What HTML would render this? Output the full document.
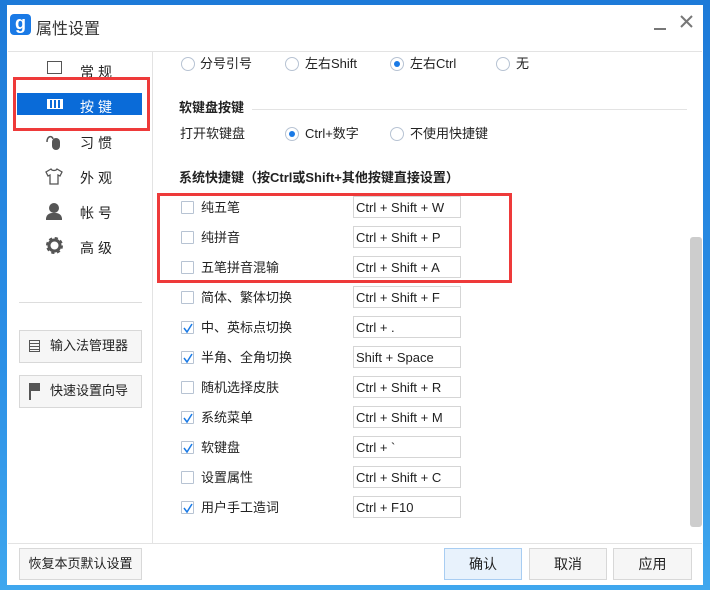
<!DOCTYPE html>
<html><head><meta charset="utf-8"><style>
*{margin:0;padding:0;box-sizing:border-box}
body{width:710px;height:590px;background:linear-gradient(180deg,#1d7ad8,#2b8fe6 60%,#3fa7ee);position:relative;overflow:hidden;font-family:"Liberation Sans","Noto Sans CJK SC",sans-serif;font-size:13px;color:#222}
.win{position:absolute;left:7px;top:5px;width:696px;height:580px;background:#fff}
.a{position:absolute}
.cb{position:absolute;width:13px;height:13px;border:1px solid #b7c3d3;background:#fff;border-radius:1px}
.cb svg{position:absolute;left:0;top:0}
.rd{position:absolute;width:14px;height:14px;border:1px solid #b7c3d3;border-radius:50%;background:#fff}
.rd.on::after{content:"";position:absolute;left:3px;top:3px;width:6px;height:6px;border-radius:50%;background:#1a7ae6}
.inp{position:absolute;width:108px;height:22px;border:1px solid #d5d5d5;background:#fff;padding-left:2px;padding-top:1px;line-height:20px;font-size:13px}
.btn{position:absolute;border:1px solid #d8d8d8;background:#f6f6f6;text-align:center;font-size:14px}
.nav{position:absolute;left:73px;font-size:14px;letter-spacing:4px}
.l{position:absolute;left:194px}
</style></head><body>
<div class="win">
 <div class="a" style="left:3px;top:9px;width:21px;height:21px;background:#1a7ae6;border-radius:4px;color:#fff;font-weight:bold;font-size:18px;line-height:19px;text-align:center">g</div>
 <div class="a" style="left:29px;top:10px;font-size:16px;color:#333">属性设置</div>
 <div class="a" style="left:647px;top:23px;width:12px;height:2px;background:#777"></div>
 <svg class="a" style="left:673px;top:10px" width="13" height="13"><path d="M1 1L12 12M12 1L1 12" stroke="#777" stroke-width="2"/></svg>
 <div class="a" style="left:1px;top:46px;width:694px;height:1px;background:#e3e3e3"></div>
 <div class="a" style="left:145px;top:47px;width:1px;height:491px;background:#e3e3e3"></div>
 <div class="a" style="left:1px;top:538px;width:694px;height:1px;background:#e3e3e3"></div>
 <!-- sidebar -->
 <div class="a" style="left:40px;top:56px;width:15px;height:13px;border:1.5px solid #555"></div>
 <div class="nav" style="top:57px">常规</div>
 <div class="a" style="left:10px;top:88px;width:125px;height:22px;background:#0a6bd8"></div>
 <div class="a" style="left:40px;top:94px;width:16px;height:10px;border:1.5px solid #fff;background:repeating-linear-gradient(90deg,#fff 0 2px,transparent 2px 4px)"></div>
 <div class="nav" style="top:92px;color:#fff">按键</div>
 <div class="a" style="left:6px;top:72px;width:137px;height:54px;border:3px solid #ee3a3a"></div>
 <svg class="a" style="left:38px;top:128px" width="18" height="18"><path d="M2 9C2 3 7 2 8 6" fill="none" stroke="#555" stroke-width="1.5"/><rect x="7" y="5" width="8" height="12" rx="4" fill="#555"/></svg>
 <div class="nav" style="top:128px">习惯</div>
 <svg class="a" style="left:38px;top:163px" width="18" height="17"><path d="M6 1L1 4L3 8L5 7V16H13V7L15 8L17 4L12 1C11 3 7 3 6 1Z" fill="none" stroke="#555" stroke-width="1.3"/></svg>
 <div class="nav" style="top:163px">外观</div>
 <div class="a" style="left:42px;top:198px;width:10px;height:10px;border-radius:50%;background:#555"></div>
 <div class="a" style="left:39px;top:208px;width:16px;height:7px;border-radius:6px 6px 0 0;background:#555"></div>
 <div class="nav" style="top:198px">帐号</div>
 <svg class="a" style="left:39px;top:232px" width="17" height="17"><circle cx="8.5" cy="8.5" r="5.5" fill="none" stroke="#555" stroke-width="3"/><circle cx="8.5" cy="8.5" r="7" fill="none" stroke="#555" stroke-width="3" stroke-dasharray="3 2.5"/></svg>
 <div class="nav" style="top:233px">高级</div>
 <div class="a" style="left:12px;top:297px;width:123px;height:1px;background:#ddd"></div>
 <div class="btn" style="left:12px;top:325px;width:123px;height:33px;line-height:30px;text-align:left;padding-left:30px;font-size:13px">输入法管理器</div>
 <div class="a" style="left:22px;top:335px;width:11px;height:12px;border:1.5px solid #555;background:repeating-linear-gradient(180deg,transparent 0 2px,#555 2px 3px)"></div>
 <div class="btn" style="left:12px;top:370px;width:123px;height:33px;line-height:30px;text-align:left;padding-left:30px;font-size:13px">快速设置向导</div>
 <div class="a" style="left:22px;top:378px;width:2px;height:17px;background:#555"></div>
 <div class="a" style="left:24px;top:378px;width:9px;height:8px;background:#555"></div>
 <div class="btn" style="left:12px;top:543px;width:123px;height:32px;line-height:30px;font-size:13px">恢复本页默认设置</div>
 <!-- content -->
 <div class="rd" style="left:174px;top:52px"></div><div class="a" style="left:193px;top:48px">分号引号</div>
 <div class="rd" style="left:278px;top:52px"></div><div class="a" style="left:298px;top:48px">左右Shift</div>
 <div class="rd on" style="left:383px;top:52px"></div><div class="a" style="left:403px;top:48px">左右Ctrl</div>
 <div class="rd" style="left:489px;top:52px"></div><div class="a" style="left:509px;top:48px">无</div>
 <div class="a" style="left:172px;top:92px;font-weight:bold">软键盘按键</div>
 <div class="a" style="left:245px;top:104px;width:435px;height:1px;background:#e3e3e3"></div>
 <div class="a" style="left:173px;top:118px">打开软键盘</div>
 <div class="rd on" style="left:278px;top:122px"></div><div class="a" style="left:298px;top:118px">Ctrl+数字</div>
 <div class="rd" style="left:383px;top:122px"></div><div class="a" style="left:403px;top:118px">不使用快捷键</div>
 <div class="a" style="left:172px;top:162px;font-weight:bold">系统快捷键（按Ctrl或Shift+其他按键直接设置）</div>
 <div class="a" style="left:150px;top:188px;width:355px;height:90px;border:3px solid #ee3a3a"></div>
 <div class="cb" style="left:174px;top:196px"></div><div class="l" style="top:192px">纯五笔</div><div class="inp" style="left:346px;top:191px">Ctrl + Shift + W</div>
 <div class="cb" style="left:174px;top:226px"></div><div class="l" style="top:222px">纯拼音</div><div class="inp" style="left:346px;top:221px">Ctrl + Shift + P</div>
 <div class="cb" style="left:174px;top:256px"></div><div class="l" style="top:252px">五笔拼音混输</div><div class="inp" style="left:346px;top:251px">Ctrl + Shift + A</div>
 <div class="cb" style="left:174px;top:286px"></div><div class="l" style="top:282px">简体、繁体切换</div><div class="inp" style="left:346px;top:281px">Ctrl + Shift + F</div>
 <div class="cb" style="left:174px;top:316px"><svg width="13" height="13"><path d="M2 6L5 10L10 2" fill="none" stroke="#1a7ae6" stroke-width="1.5"/></svg></div><div class="l" style="top:312px">中、英标点切换</div><div class="inp" style="left:346px;top:311px">Ctrl + .</div>
 <div class="cb" style="left:174px;top:346px"><svg width="13" height="13"><path d="M2 6L5 10L10 2" fill="none" stroke="#1a7ae6" stroke-width="1.5"/></svg></div><div class="l" style="top:342px">半角、全角切换</div><div class="inp" style="left:346px;top:341px">Shift + Space</div>
 <div class="cb" style="left:174px;top:376px"></div><div class="l" style="top:372px">随机选择皮肤</div><div class="inp" style="left:346px;top:371px">Ctrl + Shift + R</div>
 <div class="cb" style="left:174px;top:406px"><svg width="13" height="13"><path d="M2 6L5 10L10 2" fill="none" stroke="#1a7ae6" stroke-width="1.5"/></svg></div><div class="l" style="top:402px">系统菜单</div><div class="inp" style="left:346px;top:401px">Ctrl + Shift + M</div>
 <div class="cb" style="left:174px;top:436px"><svg width="13" height="13"><path d="M2 6L5 10L10 2" fill="none" stroke="#1a7ae6" stroke-width="1.5"/></svg></div><div class="l" style="top:432px">软键盘</div><div class="inp" style="left:346px;top:431px">Ctrl + `</div>
 <div class="cb" style="left:174px;top:466px"></div><div class="l" style="top:462px">设置属性</div><div class="inp" style="left:346px;top:461px">Ctrl + Shift + C</div>
 <div class="cb" style="left:174px;top:496px"><svg width="13" height="13"><path d="M2 6L5 10L10 2" fill="none" stroke="#1a7ae6" stroke-width="1.5"/></svg></div><div class="l" style="top:492px">用户手工造词</div><div class="inp" style="left:346px;top:491px">Ctrl + F10</div>
 <!-- scrollbar -->
 <div class="a" style="left:683px;top:232px;width:12px;height:290px;background:#cdcdcd;border-radius:3px"></div>
 <!-- bottom buttons -->
 <div class="btn" style="left:437px;top:543px;width:78px;height:32px;line-height:30px;background:#e8f2fc;border-color:#a8cdf2">确认</div>
 <div class="btn" style="left:522px;top:543px;width:78px;height:32px;line-height:30px">取消</div>
 <div class="btn" style="left:606px;top:543px;width:79px;height:32px;line-height:30px">应用</div>
</div>
</body></html>
